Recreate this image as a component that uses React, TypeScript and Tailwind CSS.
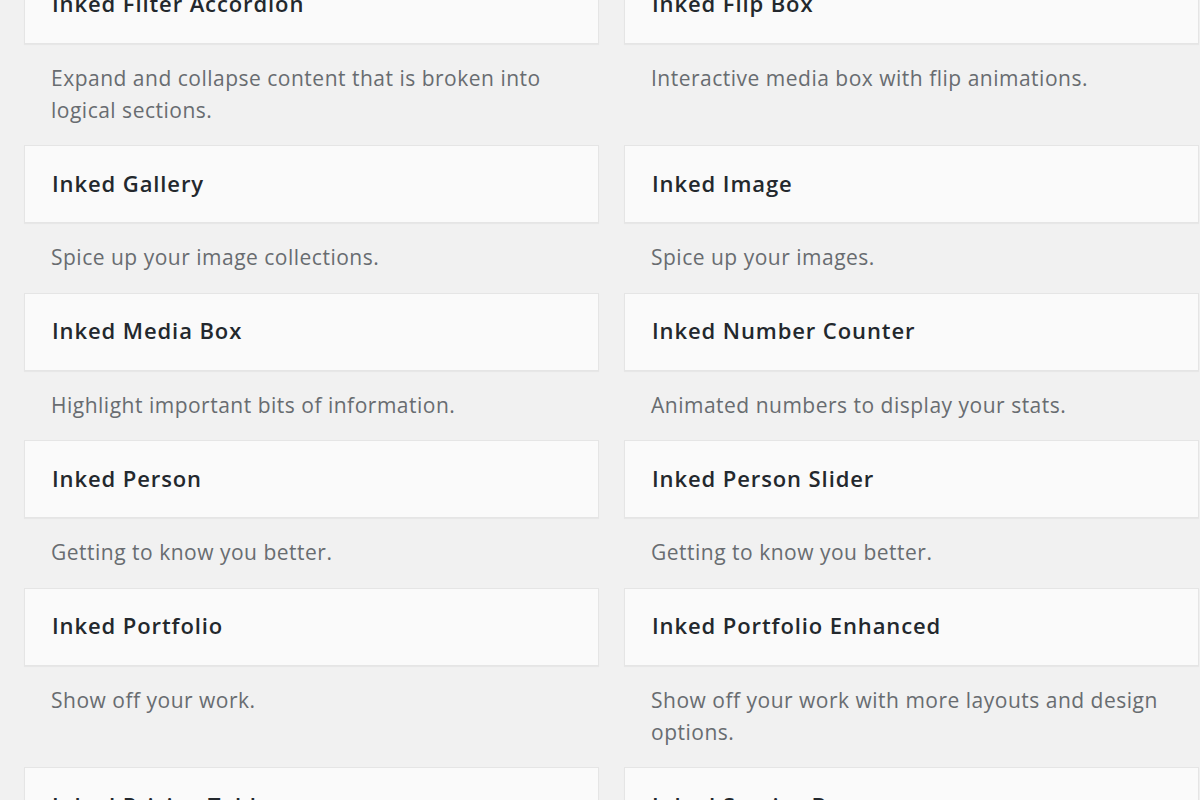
const widgets = [
  { title: 'Inked Filter Accordion', desc: 'Expand and collapse content that is broken into logical sections.' },
  { title: 'Inked Flip Box', desc: 'Interactive media box with flip animations.' },
  { title: 'Inked Gallery', desc: 'Spice up your image collections.' },
  { title: 'Inked Image', desc: 'Spice up your images.' },
  { title: 'Inked Media Box', desc: 'Highlight important bits of information.' },
  { title: 'Inked Number Counter', desc: 'Animated numbers to display your stats.' },
  { title: 'Inked Person', desc: 'Getting to know you better.' },
  { title: 'Inked Person Slider', desc: 'Getting to know you better.' },
  { title: 'Inked Portfolio', desc: 'Show off your work.' },
  { title: 'Inked Portfolio Enhanced', desc: 'Show off your work with more layouts and design options.' },
  { title: 'Inked Pricing Table', desc: 'Compare plans and prices.' },
  { title: 'Inked Service Box', desc: 'Describe what you offer.' },
]

function WidgetItem({ title, desc }: { title: string; desc: string }) {
  return (
    <div className="flex flex-col">
      <div className="h-[78px] border border-[#e5e5e5] bg-[#fafafa] px-[27px] flex items-center shadow-[0_1px_1px_rgba(0,0,0,0.04)]">
        <h3 className="text-[22px] font-semibold text-[#23282d] leading-none tracking-[0.9px] pb-[3px]">{title}</h3>
      </div>
      <p className="pl-[27px] pr-2 pt-[18px] pb-[19.5px] text-[21px] leading-[32px] text-[#686c70] tracking-[0.5px]">{desc}</p>
    </div>
  )
}

export default function App() {
  return (
    <div
      className="w-[1200px] h-[800px] overflow-hidden bg-[#f1f1f1]"
      style={{ fontFamily: '"Open Sans", "Liberation Sans", Arial, sans-serif' }}
    >
      <div className="mt-[-34.5px] pl-[24px] grid grid-cols-[575px_575px] gap-x-[25px]">
        {widgets.map((w) => (
          <WidgetItem key={w.title} title={w.title} desc={w.desc} />
        ))}
      </div>
    </div>
  )
}
